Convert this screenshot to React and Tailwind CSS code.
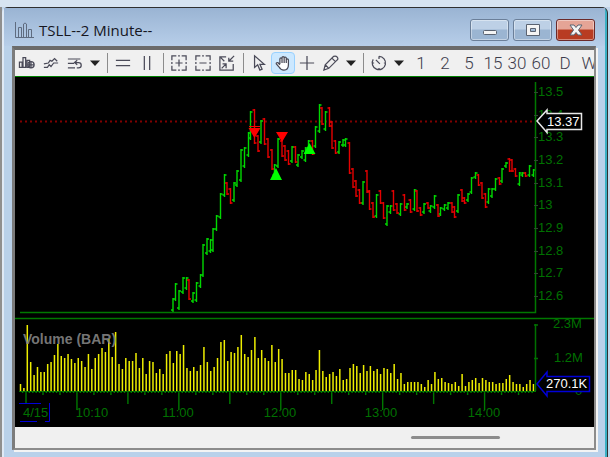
// x, high, low, direction (1 = up, 0 = down)
const PRICE_BARS = [
  [173, 298, 312, 1], [175.5, 283, 301, 1], [179, 290, 310, 1], [183, 277, 294, 1], [186.5, 277, 290, 1],
  [189, 279, 300, 0], [193, 292, 303, 1], [196.5, 282, 302, 1], [200.5, 274, 288, 1], [203, 244, 277, 1],
  [207, 238, 255, 1], [210.5, 239, 253, 1], [213, 228, 252, 1], [216.5, 215, 231, 1], [220.5, 193, 219, 1],
  [224.5, 174, 197, 1], [227, 182, 195, 0], [230.5, 188, 204, 0], [234, 182, 202, 1], [237, 170, 187, 1],
  [241, 149, 182, 1], [244.5, 147, 168, 1], [248.5, 132, 157, 1], [250.5, 111, 140, 1], [254.5, 109, 144, 0],
  [258, 135, 152, 0], [261, 120, 144, 1], [264.5, 118, 145, 0], [268, 138, 158, 0], [272, 149, 170, 0],
  [274.5, 164, 177, 1], [278, 138, 168, 1], [282, 140, 157, 0], [285, 145, 161, 0], [288.5, 150, 165, 0],
  [292, 146, 163, 1], [295.5, 146, 163, 0], [298, 154, 167, 1], [302, 150, 159, 1], [305.5, 147, 162, 1],
  [308.5, 140, 153, 1], [312.5, 140, 155, 0], [315.5, 126, 148, 1], [319.5, 104, 133, 1], [322, 107, 125, 0],
  [325.5, 111, 131, 1], [329.5, 107, 127, 0], [332, 121, 149, 0], [335.5, 140, 154, 0], [339, 141, 154, 1],
  [343, 139, 147, 1], [345.5, 138, 147, 1], [349.5, 142, 174, 0], [353, 168, 188, 0], [356, 180, 197, 0],
  [359.5, 189, 204, 0], [363, 181, 205, 1], [367, 170, 193, 0], [369.5, 190, 210, 0], [373, 202, 218, 0],
  [376.5, 194, 218, 1], [380.5, 190, 204, 0], [383.5, 202, 219, 0], [387, 205, 226, 1], [390.5, 205, 214, 1],
  [393.5, 190, 211, 0], [397, 203, 214, 0], [400.5, 203, 216, 1], [404.5, 194, 211, 0], [407, 203, 209, 1],
  [410.5, 199, 213, 0], [414.5, 189, 211, 1], [417, 190, 212, 0], [420.5, 207, 216, 0], [424, 203, 214, 1],
  [428, 202, 209, 0], [430.5, 205, 213, 1], [434.5, 195, 209, 1], [438, 204, 217, 0], [440.5, 207, 216, 1],
  [444.5, 204, 211, 1], [448, 202, 210, 1], [452, 202, 213, 0], [454.5, 206, 218, 0], [458, 194, 213, 1],
  [462, 189, 202, 0], [464.5, 197, 204, 0], [468, 193, 202, 1], [471.5, 177, 194, 1], [475.5, 172, 179, 1],
  [478.5, 174, 186, 0], [482, 182, 199, 0], [485.5, 193, 208, 0], [488.5, 188, 204, 1], [492, 188, 198, 1],
  [495.5, 178, 191, 1], [499.5, 177, 185, 0], [502, 168, 183, 1], [506, 162, 168, 1], [509.5, 158, 172, 0],
  [512, 159, 172, 0], [515.5, 168, 177, 0], [519.5, 172, 186, 1], [522.5, 172, 177, 1], [525.5, 172, 177, 0],
  [529.5, 165, 177, 1], [533.5, 169, 177, 1],
];

const VOLUME_TOPS = [
  384, 388, 325, 362, 375, 367, 372, 372, 364, 362, 355, 344, 356, 358, 354, 359, 363, 358, 361, 367,
  354, 369, 358, 354, 348, 352, 339, 357, 332, 364, 369, 358, 361, 361, 353, 368, 358, 374, 361, 362,
  373, 369, 374, 354, 351, 363, 351, 354, 345, 368, 371, 367, 371, 365, 347, 362, 371, 367, 358, 342,
  340, 361, 352, 353, 347, 335, 354, 357, 350, 337, 358, 350, 358, 361, 345, 362, 349, 359, 373, 373,
  370, 370, 379, 380, 372, 374, 380, 370, 350, 371, 377, 374, 372, 376, 369, 380, 379, 368, 364, 366,
  373, 365, 371, 366, 371, 369, 374, 368, 369, 373, 364, 379, 373, 384, 382, 382, 382, 382, 384, 387,
  380, 384, 372, 379, 378, 382, 383, 384, 382, 386, 374, 386, 382, 380, 378, 383, 378, 380, 382, 382,
  384, 383, 383, 379, 375, 382, 384, 384, 387, 384, 380, 384,
];

const PRICES = ['13.5', '13.4', '13.3', '13.2', '13.1', '13', '12.9', '12.8', '12.7', '12.6'];

const TIMES = [
  { x: 92, label: '10:10' },
  { x: 178, label: '11:00' },
  { x: 280, label: '12:00' },
  { x: 381, label: '13:00' },
  { x: 484, label: '14:00' },
];

const INTERVALS = ['1', '2', '5', '15', '30', '60', 'D', 'W'];

const BASE = 391;
const STEP = 3.397;

function barPath(up) {
  return PRICE_BARS.filter((b) => b[3] === up)
    .map(([x, high, low]) => {
      const open = up ? low - 2 : high + 1;
      const close = up ? high + 1 : low - 1;
      return `M${x} ${high}V${low}M${x - 2} ${open}H${x}M${x} ${close}H${x + 2}`;
    })
    .join('');
}

function axisTicks() {
  let d = '';
  for (let i = -1; i < 150; i++) {
    const x = 26 + i * STEP;
    let len = 2;
    if (i % 5 === 0) len = 4;
    if (i % 15 === 0) len = 13;
    if (i % 30 === 15) len = 19;
    d += `M${x} ${BASE}v${len}`;
  }
  return d;
}

function Chart() {
  return (
    <svg viewBox="15 77 579 350" className="block w-full bg-black font-['Liberation_Sans',sans-serif] text-[13px]" role="img" aria-label="TSLL 2 minute price and volume">
      {/* price pane */}
      <path d="M20 121.5H536" stroke="#800000" strokeWidth="2" strokeDasharray="2 3" />
      <path d={barPath(1)} stroke="#00d800" strokeWidth="1.4" fill="none" />
      <path d={barPath(0)} stroke="#e60000" strokeWidth="1.4" fill="none" />
      <path d="M249 126.5h11" stroke="#f00" />
      <path d="M248.5 128h12l-6 10zM276 132h12l-6 10z" fill="#f00" />
      <path d="M270 180h12l-6-12zM303.5 154h12l-6-11z" fill="#0f0" />
      <path d="M20 312.5H535.5V82" stroke="#007800" strokeWidth="1.5" fill="none" />
      {PRICES.map((p, i) => (
        <g key={p}>
          <path d={`M534 ${92.5 + Math.round(i * 22.65)}h4`} stroke="#304830" />
          <text x="538" y={96 + Math.round(i * 22.65)} fill="#007000">{p}</text>
        </g>
      ))}
      <path d="M537 121L547 110V113.5H581.5V129.5H547V132.5Z" fill="#000" stroke="#e8e8e8" strokeWidth="1.5" />
      <text x="547" y="126" fill="#fff">13.37</text>

      {/* volume pane */}
      <text x="553" y="328" fill="#007000">2.3M</text>
      <path d="M538 314h56v4h-56z" fill="#000" />
      <path d="M15 318.5h579" stroke="#007800" strokeWidth="1.5" />
      <text x="554" y="362" fill="#007000">1.2M</text>
      <text x="575" y="395" fill="#007000">0</text>
      <path d={VOLUME_TOPS.map((y, i) => `M${20.5 + i * STEP} ${BASE}V${y}`).join('')} stroke="#ee0" strokeWidth="1.5" />
      <text x="23" y="344" fill="#858585" fillOpacity="0.9" fontWeight="700" fontSize="14">Volume (BAR)</text>
      <path d="M19 391.5H536" stroke="#007800" />
      <path d={axisTicks()} stroke="#007800" strokeWidth="1.4" />
      <path d="M535.5 324V391M534 325h4M534 358.5h4" stroke="#007000" strokeWidth="1.5" />
      {TIMES.map((t) => (
        <text key={t.label} x={t.x} y="417" textAnchor="middle" fill="#007000">{t.label}</text>
      ))}
      <text x="23" y="417" fill="#007000">4/15</text>
      <path d="M19 403.5H41M49.5 403V421.5H45M37 421.5H20" stroke="#0000d8" fill="none" />
      <path d="M537 384L547 372V376.5H589.5V391.5H547V396Z" fill="#000" stroke="#0000d8" strokeWidth="1.5" />
      <text x="546" y="388" fill="#fff">270.1K</text>
    </svg>
  );
}

function ToolButton({ label, active, children }) {
  return (
    <button
      type="button"
      aria-label={label}
      className={`flex h-[22px] w-6 shrink-0 items-center justify-center rounded-sm border ${active ? 'border-[#99d1ff] bg-[#cce8ff]' : 'border-transparent'}`}
    >
      <svg viewBox="0 0 18 18" className="h-4 w-4 overflow-visible" fill="none" stroke="#4a4a58" strokeWidth="1.4">
        {children}
      </svg>
    </button>
  );
}

function Caret({ label }) {
  return (
    <button type="button" aria-label={label} className="flex h-[22px] w-4 shrink-0 items-center justify-center">
      <svg viewBox="0 0 10 6" className="h-[6px] w-[10px]" fill="#222">
        <path d="M0 0.5h10L5 6z" />
      </svg>
    </button>
  );
}

function Separator() {
  return (
    <div className="flex h-5 w-2 shrink-0 justify-center">
      <div className="w-px bg-[#8c8c8c]" />
    </div>
  );
}

function Toolbar() {
  return (
    <div className="flex h-[27px] items-center overflow-hidden border-b border-[#008000] bg-[#f0f0f0]">
      <ToolButton label="Chart style">
        <path d="M0.5 8h3v6h-3zM4.5 3h3v11h-3zM9 6h3v8h-3z" />
        <circle cx="13.5" cy="11" r="3.5" />
        <path d="M10 11h7M13.5 7.5v7" />
      </ToolButton>
      <ToolButton label="Studies">
        <path d="M1 14h4l2-3 2 2 3-4h5M1 10l5-1 2-3 2 1 3-3 3 3" />
      </ToolButton>
      <ToolButton label="Templates">
        <path d="M1 4.5h14M1 9.5h7M1 14.5h8M9 8.5h4a3 3 0 0 1 0 6h-2M11.5 6l-3 2.5 3 2.5" />
      </ToolButton>
      <Caret label="Template list" />
      <Separator />
      <ToolButton label="Horizontal layout">
        <path d="M1 6h16M1 12h16" />
      </ToolButton>
      <ToolButton label="Vertical layout">
        <path d="M6 1v16M12 1v16" />
      </ToolButton>
      <Separator />
      <ToolButton label="Zoom in">
        <path d="M1 6V1h5M12 1h5v5M17 12v5h-5M6 17H1v-5M8 1h2M8 17h2M1 8v2M17 8v2M5 9h8M9 5v8" />
      </ToolButton>
      <ToolButton label="Zoom out">
        <path d="M1 6V1h5M12 1h5v5M17 12v5h-5M6 17H1v-5M8 1h2M8 17h2M1 8v2M17 8v2M5 9h8" />
      </ToolButton>
      <ToolButton label="Fit to window">
        <path d="M8 2H1v15h15V10M17 1l-6 6M11 3v4h5M3 15l5-5M4 10h4v5M2 3l4 4" />
      </ToolButton>
      <Separator />
      <ToolButton label="Pointer">
        <path d="M4 1v13l3.5-3 2.5 6 2.5-1-2.5-5.5H15z" />
      </ToolButton>
      <ToolButton label="Pan" active>
        <path d="M5.5 10V4.5a1.2 1.2 0 0 1 2.4 0V9V3a1.2 1.2 0 0 1 2.4 0v6V3.5a1.2 1.2 0 0 1 2.4 0V9V5.5a1.2 1.2 0 0 1 2.4 0V11c0 3.5-2 6-5 6s-4.5-1.5-5.5-3.5L1.5 10c-.6-1.2 1-2 2-1.2L5.5 11" fill="#fff" />
      </ToolButton>
      <ToolButton label="Crosshair">
        <path d="M9 1v16M1 9h16" />
      </ToolButton>
      <ToolButton label="Draw">
        <path d="M1 17l1.5-6L12 1.5q2.5-1 4 1t0 3L6.5 15zM2.5 11l4 4M10 3.5l4 4" />
      </ToolButton>
      <Caret label="Drawing tools" />
      <Separator />
      <ToolButton label="Time">
        <path d="M9 1.5a7.5 7.5 0 1 1-6.5 3.5M9 1.5v3M5.5 5.5L10 10M1.5 9h2M14.5 9h2M9 14.5v2" />
      </ToolButton>
      <Caret label="Time intervals" />
      <div className="flex shrink-0 pl-0.5">
        {INTERVALS.map((item) => (
          <button key={item} type="button" className="flex h-[22px] w-6 shrink-0 items-center justify-center font-[Roboto,sans-serif] text-[17px] leading-none font-light text-[#3c3c4c]">
            {item}
          </button>
        ))}
      </div>
    </div>
  );
}

function TitleButton({ label, danger, children }) {
  return (
    <button
      type="button"
      aria-label={label}
      className={`flex h-[22px] w-[39px] items-center justify-center rounded-[3px] border shadow-[inset_0_0_0_1px_rgba(255,255,255,0.4)] ${danger ? 'border-[#6b2a2a] bg-linear-to-b from-[#e5a496] from-45% to-[#b83c22] to-50%' : 'border-[#6b7f99] bg-linear-to-b from-[#bdd0e6] from-45% to-[#9bb5d2] to-50%'}`}
    >
      <svg viewBox="0 0 16 14" className="h-[14px] w-4" fill="#f4f4f4" stroke="#5a6270">
        {children}
      </svg>
    </button>
  );
}

function TitleBar() {
  return (
    <div className="flex h-[38px] items-center bg-linear-to-b from-[#9ab4d3] to-[#b7cee9] pt-1.5 pr-2.5 pl-2.5">
      <svg viewBox="0 0 20 18" className="h-[18px] w-5" fill="none" stroke="#5f6c80">
        <path d="M1.5 1v15.5H20M4.5 16V6.5h3V16M9.5 16V3q1.5-2 3 0v13M14.5 16V8.5h3V16" />
      </svg>
      <h1 className="min-w-0 flex-1 truncate pl-[5px] font-['Open_Sans',sans-serif] text-[15px] text-[#16161e]">TSLL--2 Minute--</h1>
      <div className="flex gap-1">
        <TitleButton label="Minimize">
          <rect x="1.5" y="7.5" width="13" height="4" rx="1" />
        </TitleButton>
        <TitleButton label="Maximize">
          <path d="M1.5 1.5h13v11h-13zM5.5 5.5v3h5v-3z" fillRule="evenodd" />
        </TitleButton>
        <TitleButton label="Close" danger>
          <path d="M2 2h4l2 2.5L10 2h4l-3.5 5L14 12h-4L8 9.5 6 12H2l3.5-5z" />
        </TitleButton>
      </div>
    </div>
  );
}

export default function App() {
  return (
    <div className="flex min-h-screen flex-col bg-[#d7e4f1] pt-[7px]">
      <div className="flex flex-1 flex-col border-l-2 border-[#8f8f8f] bg-[#c3d6eb] pr-[3px]">
        <div className="flex flex-1 flex-col rounded-t-md border-t border-r-2 border-l-2 border-t-[#303030] border-r-[#3ab0c4] border-l-[#dfe9f5] bg-[#b9d1ea] shadow-[1px_0_0_#303030]">
          <TitleBar />
          <div className="mr-[9px] ml-2 border-t-4 border-r-2 border-b-2 border-l-[3px] border-t-[#6b6b6b] border-r-[#8c8c8c] border-b-[#8c8c8c] border-l-[#7c7c7c] shadow-[2px_2px_0_#f4f4f4]">
            <Toolbar />
            <Chart />
            <div className="flex h-[21px] items-center justify-end bg-[#f0f0f0] pr-[94px]">
              <div className="h-[3px] w-[89px] rounded-full bg-[#8c8c8c]" />
            </div>
          </div>
        </div>
      </div>
    </div>
  );
}
